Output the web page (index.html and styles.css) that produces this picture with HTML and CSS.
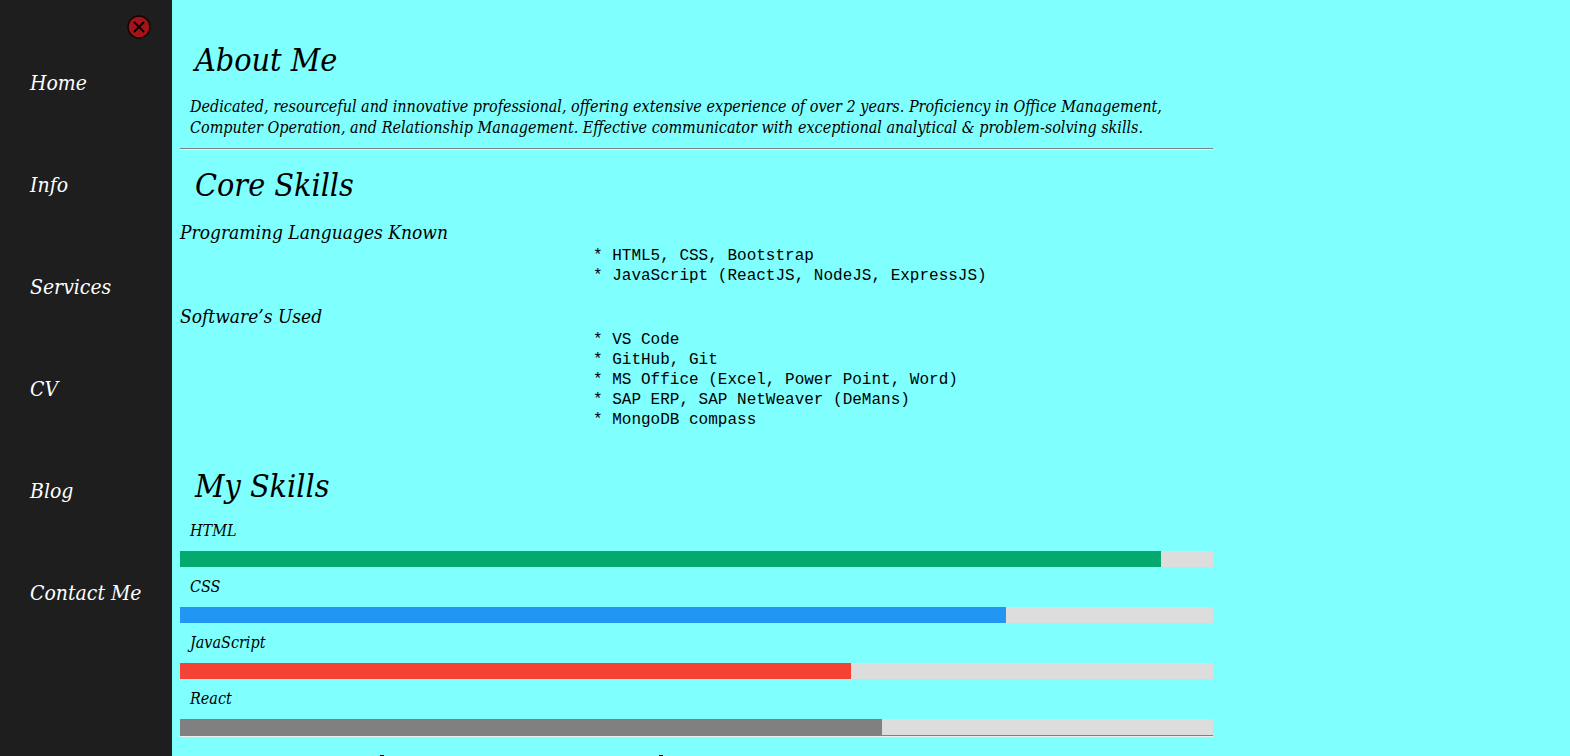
FILE: index.html
```html
<!DOCTYPE html>
<html lang="en">
<head>
<meta charset="utf-8">
<title>About Me</title>
<link rel="stylesheet" href="styles.css">
</head>
<body>
<div class="page">
  <aside class="sidebar">
    <button class="close" type="button" aria-label="Close menu">
      <svg viewBox="0 0 24 24" width="24" height="24" aria-hidden="true">
        <circle cx="12" cy="12" r="11" fill="#a31419" stroke="#180305" stroke-width="1.5"/>
        <path d="M7.5 7.5 16.5 16.5M16.5 7.5 7.5 16.5" fill="none" stroke="#0b0202" stroke-width="2" stroke-linecap="round"/>
      </svg>
    </button>
    <nav class="menu">
      <a href="#home">Home</a>
      <a href="#info">Info</a>
      <a href="#services">Services</a>
      <a href="#cv">CV</a>
      <a href="#blog">Blog</a>
      <a href="#contact">Contact Me</a>
    </nav>
  </aside>
  <main class="main">
    <div class="content">
      <section>
        <h2 class="title">About Me</h2>
        <p class="intro">Dedicated, resourceful and innovative professional, offering extensive experience of over 2 years. Proficiency in Office Management,<br>Computer Operation, and Relationship Management. Effective communicator with exceptional analytical &amp; problem-solving skills.</p>
      </section>
      <hr class="rule">
      <section>
        <h2 class="title">Core Skills</h2>
        <h3 class="subtitle">Programing Languages Known</h3>
        <pre class="list">* HTML5, CSS, Bootstrap
* JavaScript (ReactJS, NodeJS, ExpressJS)</pre>
        <h3 class="subtitle">Software’s Used</h3>
        <pre class="list">* VS Code
* GitHub, Git
* MS Office (Excel, Power Point, Word)
* SAP ERP, SAP NetWeaver (DeMans)
* MongoDB compass</pre>
      </section>
      <section class="skills">
        <h2 class="title">My Skills</h2>
        <p class="label">HTML</p>
        <div class="track"><div class="bar green" style="width:95%"></div></div>
        <p class="label">CSS</p>
        <div class="track"><div class="bar blue" style="width:80%"></div></div>
        <p class="label">JavaScript</p>
        <div class="track"><div class="bar red" style="width:65%"></div></div>
        <p class="label">React</p>
        <div class="track"><div class="bar gray" style="width:68%"></div></div>
      </section>
      <hr class="rule">
      <div class="ticks"><span></span><span></span></div>
    </div>
  </main>
</div>
</body>
</html>
```
FILE: styles.css
```css
* { box-sizing: border-box; }
body {
  margin: 0;
  background: #80ffff;
  color: #000;
  font-family: "DejaVu Serif Condensed", "DejaVu Serif", serif;
  font-style: italic;
}
.page { display: flex; min-height: 100vh; }
.sidebar {
  flex: 0 0 172px;
  display: flex;
  flex-direction: column;
  padding-top: 15px;
  background: #1e1e1e;
}
.close {
  align-self: flex-end;
  margin-right: 21px;
  padding: 0;
  border: 0;
  background: none;
  line-height: 0;
}
.menu {
  display: flex;
  flex-direction: column;
  gap: 70px;
  padding: 28px 0 0 30px;
}
.menu a {
  color: #fff;
  font-size: 21px;
  line-height: 32px;
  text-decoration: none;
  white-space: nowrap;
}
.main { flex: 1; min-width: 0; }
.content { width: 75%; padding: 36px 8px 0; }
.title {
  margin: 0 0 10px 15px;
  font-size: 32px;
  font-weight: 400;
  line-height: 48px;
}
.intro {
  margin: 12px 10px 10px;
  font-size: 16px;
  line-height: 21px;
  white-space: nowrap;
}
.rule {
  height: 2px;
  margin: 0 0 11px;
  border: 0;
  border-top: 1px solid #808080;
  border-bottom: 1px solid #eee;
}
.subtitle {
  margin: 10px 0 0;
  font-size: 19px;
  font-weight: 400;
  line-height: 27px;
}
.list {
  margin: 0 0 17px 40%;
  font: 16px/20px "Liberation Mono", monospace;
}
.skills { padding-top: 15px; }
.label {
  margin: 9px 10px;
  font-size: 16px;
  line-height: 22px;
}
.track { height: 16px; background: #ddd; }
.bar { height: 16px; }
.green { background: #04aa6d; }
.blue { background: #2196f3; }
.red { background: #f44336; }
.gray { background: #808080; }
.ticks {
  display: flex;
  gap: 275px;
  margin-top: 18px;
  padding-left: 200px;
}
.ticks span { width: 4px; height: 1px; background: #000; }
```
